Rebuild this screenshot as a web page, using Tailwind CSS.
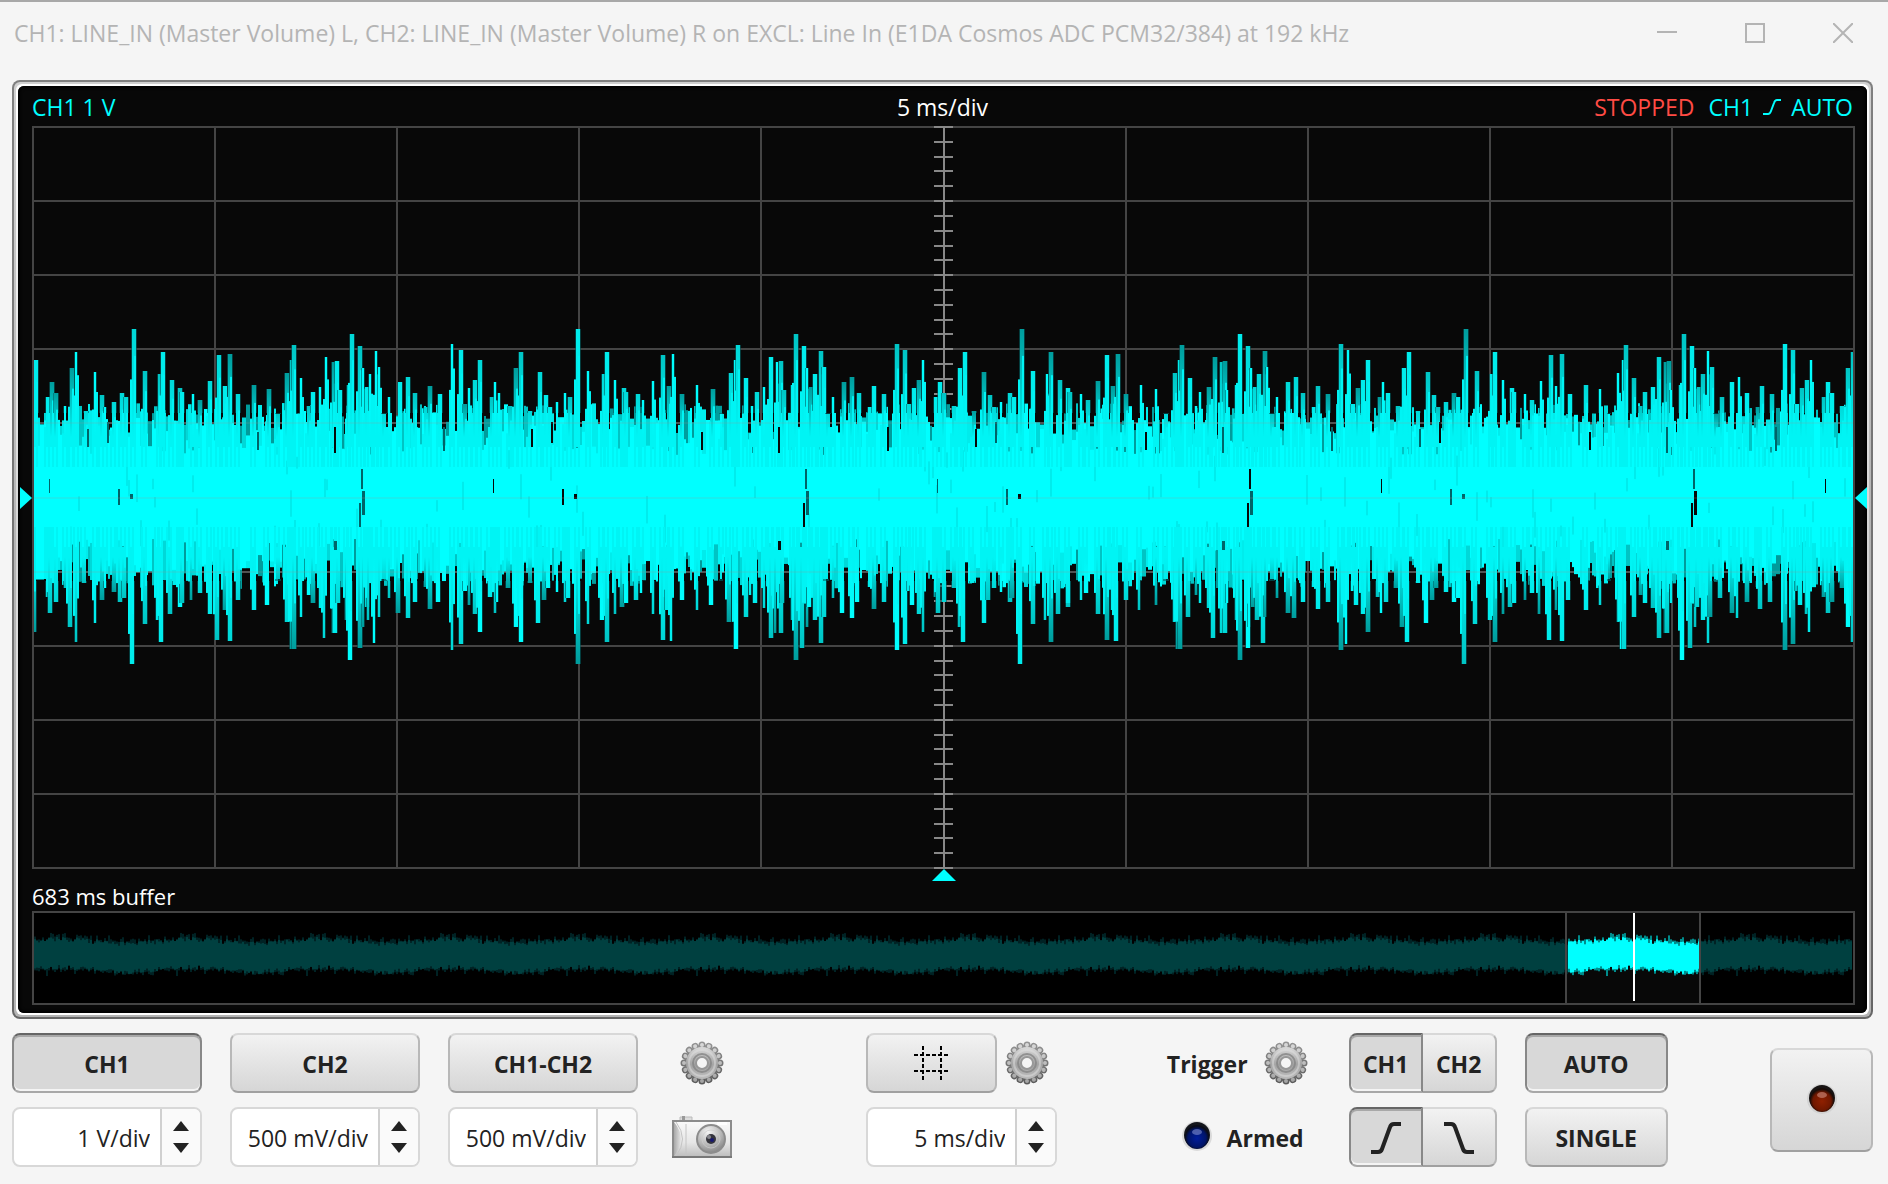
<!DOCTYPE html>
<html lang="en">
  <head>
    <meta charset="UTF-8" />
    <meta name="viewport" content="width=device-width, initial-scale=1.0" />
    <title>Oscilloscope</title>
    <script src="https://cdn.jsdelivr.net/npm/@tailwindcss/browser@4"></script>
  </head>
  <body class="min-h-screen flex flex-col bg-[#f5f5f5] border-t-2 border-[#a8a8a8] text-[23px] leading-7 text-[#222] font-['Open_Sans','Noto_Sans',sans-serif]">
    <!-- Shared icons -->
    <svg class="absolute w-0 h-0" aria-hidden="true">
      <defs>
        <linearGradient id="metal" x1="0" y1="0" x2="0" y2="1">
          <stop offset="0" stop-color="#dadada" />
          <stop offset="0.55" stop-color="#a4a4a4" />
          <stop offset="1" stop-color="#bcbcbc" />
        </linearGradient>
        <linearGradient id="rim" gradientUnits="userSpaceOnUse" x1="0" y1="0" x2="0" y2="44">
          <stop offset="0" stop-color="#969696" />
          <stop offset="1" stop-color="#585858" />
        </linearGradient>
        <linearGradient id="teeth" gradientUnits="userSpaceOnUse" x1="0" y1="0" x2="0" y2="44">
          <stop offset="0" stop-color="#dcdcdc" />
          <stop offset="1" stop-color="#a0a0a0" />
        </linearGradient>
        <symbol id="gear" viewBox="0 0 44 44">
          <circle cx="22" cy="22" r="18" fill="none" stroke="url(#rim)" stroke-width="7" stroke-linecap="round" pathLength="160" stroke-dasharray="0.01 9.99" />
          <circle cx="22" cy="22" r="17" fill="url(#rim)" />
          <circle cx="22" cy="22" r="18" fill="none" stroke="url(#teeth)" stroke-width="4" stroke-linecap="round" pathLength="160" stroke-dasharray="0.01 9.99" />
          <circle cx="22" cy="22" r="16" fill="url(#metal)" />
          <circle cx="22" cy="22" r="13" fill="none" stroke="#e0e0e0" stroke-width="2" opacity="0.5" />
          <circle cx="22" cy="22" r="9" fill="none" stroke="#848484" stroke-width="2" opacity="0.8" />
          <circle cx="22" cy="22" r="6" fill="#f5f5f5" stroke="#989898" stroke-width="2" />
        </symbol>
      </defs>
    </svg>

    <!-- Title bar -->
    <header class="h-[62px] shrink-0 flex items-center justify-between pl-[14px] pr-[35px] text-[#b4b4b4]">
      <h1 class="whitespace-nowrap">CH1: LINE_IN (Master Volume) L, CH2: LINE_IN (Master Volume) R on EXCL: Line In (E1DA Cosmos ADC PCM32/384) at 192 kHz</h1>
      <div class="flex gap-[68px]">
        <button aria-label="Minimize"><svg class="w-5 h-5" viewBox="0 0 20 20"><path d="M0 9h20" stroke="currentColor" stroke-width="2" /></svg></button>
        <button aria-label="Maximize"><svg class="w-5 h-5" viewBox="0 0 20 20"><path d="M1 1h18v18H1z" fill="none" stroke="currentColor" stroke-width="2" /></svg></button>
        <button aria-label="Close"><svg class="w-5 h-5" viewBox="0 0 20 20"><path d="M0 0l20 20M20 0L0 20" stroke="currentColor" stroke-width="2" /></svg></button>
      </div>
    </header>

    <!-- Scope screen -->
    <main class="flex-1 flex flex-col mt-4 ml-3 mr-[15px] p-[2px] rounded-lg bg-linear-to-b from-[#808080] to-[#666]">
      <div class="flex-1 flex flex-col p-[2px] rounded-md bg-linear-to-b from-[#d0d0d0] via-[#b4b4b4] to-[#b4b4b4]">
        <div class="flex-1 flex flex-col p-[2px] rounded-md bg-linear-to-b from-white via-[#d4d4d4] to-white">
          <div class="flex-1 flex flex-col pl-[14px] pr-3 pb-2 rounded-md bg-[#080808] shadow-[inset_0_0_3px_2px_#000]">
            <div class="h-10 pt-px pr-[2px] grid grid-cols-3 items-center text-[#0ff]">
              <span>CH1 1 V</span>
              <span class="text-center text-white">5 ms/div</span>
              <div class="flex items-center justify-end gap-[14px]">
                <span class="text-[#ff4b44]">STOPPED</span>
                <span class="flex items-center gap-[10px]">CH1
                  <svg class="w-[18px] h-[18px]" viewBox="0 0 18 18"><path d="M0 16h5q2 0 3-3l3-8q1-3 3-3h4" fill="none" stroke="currentColor" stroke-width="2" /></svg>
                  AUTO</span>
              </div>
            </div>
            <div class="relative flex-1">
              <canvas id="scope" class="absolute inset-0 w-full h-full"></canvas>
              <svg class="absolute right-full top-1/2 -translate-y-1/2 w-3 h-[22px]" viewBox="0 0 12 22"><path d="M0 0l12 11L0 22z" fill="#0ff" /></svg>
              <svg class="absolute left-full top-1/2 -translate-y-1/2 w-3 h-[22px]" viewBox="0 0 12 22"><path d="M12 0L0 11l12 11z" fill="#0ff" /></svg>
              <svg class="absolute left-1/2 top-full -translate-x-1/2 w-6 h-3" viewBox="0 0 24 12"><path d="M0 12L12 0l12 12z" fill="#0ff" /></svg>
            </div>
            <p class="h-[42px] pt-[13px] text-[22px] font-medium text-white">683 ms buffer</p>
            <div class="relative h-[94px]">
              <canvas id="buffer" class="absolute inset-0 w-full h-full"></canvas>
            </div>
          </div>
        </div>
      </div>
    </main>

    <!-- Controls -->
    <footer class="shrink-0 flex pt-[14px] pb-[17px] pl-3 pr-[15px] font-bold">
      <div class="grid grid-cols-[190px_190px_190px] gap-x-7 gap-y-[14px]">
        <button aria-pressed="true" class="h-[60px] pt-[2px] rounded-lg bg-[#d8d8d8] border-2 border-[#888] border-t-[#666] border-b-[#a8a8a8] shadow-[inset_0_2px_0_#a8a8a8,inset_0_-2px_0_#f4f4f4]">CH1</button>
        <button aria-pressed="false" class="h-[60px] pt-[2px] rounded-lg bg-linear-to-b from-[#f2f2f2] to-[#d6d6d6] border-2 border-[#b8b8b8] border-t-[#d8d8d8] border-b-[#a0a0a0]">CH2</button>
        <button aria-pressed="false" class="h-[60px] pt-[2px] rounded-lg bg-linear-to-b from-[#f2f2f2] to-[#d6d6d6] border-2 border-[#b8b8b8] border-t-[#d8d8d8] border-b-[#a0a0a0]">CH1-CH2</button>

        <div class="h-[60px] flex rounded-lg bg-white border-2 border-[#d8d8d8] font-normal overflow-hidden">
          <input type="text" aria-label="CH1 scale" value="1 V/div" class="flex-1 min-w-0 pt-[2px] pr-[10px] text-right" />
          <div class="w-10 flex flex-col items-center justify-center gap-3 bg-[#fafafa] border-l-2 border-[#d0d0d0]">
            <button aria-label="Increase CH1 scale"><svg class="block w-4 h-[10px]" viewBox="0 0 16 10"><path d="M0 10L8 0l8 10z" fill="#222" /></svg></button>
            <button aria-label="Decrease CH1 scale"><svg class="block w-4 h-[10px]" viewBox="0 0 16 10"><path d="M0 0l8 10 8-10z" fill="#222" /></svg></button>
          </div>
        </div>
        <div class="h-[60px] flex rounded-lg bg-white border-2 border-[#d8d8d8] font-normal overflow-hidden">
          <input type="text" aria-label="CH2 scale" value="500 mV/div" class="flex-1 min-w-0 pt-[2px] pr-[10px] text-right" />
          <div class="w-10 flex flex-col items-center justify-center gap-3 bg-[#fafafa] border-l-2 border-[#d0d0d0]">
            <button aria-label="Increase CH2 scale"><svg class="block w-4 h-[10px]" viewBox="0 0 16 10"><path d="M0 10L8 0l8 10z" fill="#222" /></svg></button>
            <button aria-label="Decrease CH2 scale"><svg class="block w-4 h-[10px]" viewBox="0 0 16 10"><path d="M0 0l8 10 8-10z" fill="#222" /></svg></button>
          </div>
        </div>
        <div class="h-[60px] flex rounded-lg bg-white border-2 border-[#d8d8d8] font-normal overflow-hidden">
          <input type="text" aria-label="CH1-CH2 scale" value="500 mV/div" class="flex-1 min-w-0 pt-[2px] pr-[10px] text-right" />
          <div class="w-10 flex flex-col items-center justify-center gap-3 bg-[#fafafa] border-l-2 border-[#d0d0d0]">
            <button aria-label="Increase CH1-CH2 scale"><svg class="block w-4 h-[10px]" viewBox="0 0 16 10"><path d="M0 10L8 0l8 10z" fill="#222" /></svg></button>
            <button aria-label="Decrease CH1-CH2 scale"><svg class="block w-4 h-[10px]" viewBox="0 0 16 10"><path d="M0 0l8 10 8-10z" fill="#222" /></svg></button>
          </div>
        </div>
      </div>

      <div class="ml-[34px] flex flex-col gap-[14px]">
        <button aria-label="Channel settings" class="h-[60px] flex items-center justify-center"><svg class="w-11 h-11"><use href="#gear" /></svg></button>
        <button aria-label="Save screenshot" class="h-[60px] flex items-center">
          <svg class="w-[60px] h-[42px]" viewBox="0 0 60 42">
            <defs>
              <linearGradient id="body" x1="0" y1="0" x2="0" y2="1">
                <stop offset="0" stop-color="#fafafa" /><stop offset="0.6" stop-color="#e6e6e6" /><stop offset="1" stop-color="#bcbcbc" />
              </linearGradient>
              <linearGradient id="grip" x1="0" y1="0" x2="1" y2="0">
                <stop offset="0" stop-color="#a8a8a8" /><stop offset="1" stop-color="#e4e4e4" />
              </linearGradient>
              <radialGradient id="lens" cx="0.4" cy="0.25" r="0.8">
                <stop offset="0" stop-color="#f4f4f4" /><stop offset="0.6" stop-color="#b4b4b4" /><stop offset="1" stop-color="#808080" />
              </radialGradient>
            </defs>
            <path d="M8 1h12v4H8z" fill="#ddd" stroke="#bbb" />
            <path d="M10 0h3v4h-3z" fill="#999" />
            <path d="M1 5h58v36H1z" fill="url(#body)" stroke="#8c8c8c" stroke-width="2" />
            <path d="M2 6q14 17 0 34z" fill="url(#grip)" />
            <path d="M4 6q13 17 0 34M14 8v32" fill="none" stroke="#c4c4c4" />
            <path d="M45 6h10v3H45z" fill="#fff" />
            <circle cx="39" cy="23" r="14" fill="url(#lens)" stroke="#8c8c8c" stroke-width="2" />
            <circle cx="39" cy="23" r="9" fill="none" stroke="#ccc" opacity="0.7" />
            <circle cx="39" cy="23" r="5" fill="#34343c" />
            <circle cx="40" cy="24" r="2" fill="#181870" />
            <circle cx="37" cy="21" r="2" fill="#8a8a90" />
            <path d="M0 41h60" stroke="#787878" stroke-width="2" />
          </svg>
        </button>
      </div>

      <div class="grow-[134]"></div>

      <div class="w-[191px] flex flex-col gap-[14px]">
        <div class="flex items-center gap-2">
          <button aria-label="Show grid" class="w-[131px] h-[60px] flex items-center justify-center rounded-lg bg-linear-to-b from-[#f2f2f2] to-[#d6d6d6] border-2 border-[#b8b8b8] border-t-[#d8d8d8] border-b-[#a0a0a0]">
            <svg class="w-9 h-[34px]" viewBox="0 0 36 34"><path d="M9 0v34M27 0v34M0 9h36M0 25h36" stroke="#000" stroke-width="2" stroke-dasharray="4 2" /></svg>
          </button>
          <button aria-label="Time settings"><svg class="w-11 h-11"><use href="#gear" /></svg></button>
        </div>
        <div class="h-[60px] flex rounded-lg bg-white border-2 border-[#d8d8d8] font-normal overflow-hidden">
          <input type="text" aria-label="Time base" value="5 ms/div" class="flex-1 min-w-0 pt-[2px] pr-[10px] text-right" />
          <div class="w-10 flex flex-col items-center justify-center gap-3 bg-[#fafafa] border-l-2 border-[#d0d0d0]">
            <button aria-label="Increase time base"><svg class="block w-4 h-[10px]" viewBox="0 0 16 10"><path d="M0 10L8 0l8 10z" fill="#222" /></svg></button>
            <button aria-label="Decrease time base"><svg class="block w-4 h-[10px]" viewBox="0 0 16 10"><path d="M0 0l8 10 8-10z" fill="#222" /></svg></button>
          </div>
        </div>
      </div>

      <div class="grow-[109]"></div>

      <div class="flex flex-col gap-[14px] items-end">
        <div class="h-[60px] flex items-center gap-4">
          <span class="pt-[2px]">Trigger</span>
          <button aria-label="Trigger settings"><svg class="w-11 h-11"><use href="#gear" /></svg></button>
        </div>
        <div class="h-[60px] flex items-center gap-[14px] pr-1">
          <svg class="w-8 h-8" viewBox="0 0 32 32">
            <defs>
              <radialGradient id="blueLed" cx="0.5" cy="0.55" r="0.5"><stop offset="0" stop-color="#001c9c" /><stop offset="0.75" stop-color="#001468" /><stop offset="1" stop-color="#0a0c18" /></radialGradient>
            </defs>
            <circle cx="16" cy="15" r="15" fill="#c8c8c8" opacity="0.6" />
            <circle cx="16" cy="14" r="13" fill="#14161c" />
            <circle cx="16" cy="16" r="12" fill="url(#blueLed)" />
            <ellipse cx="16" cy="11" rx="5" ry="3" fill="#8090d0" opacity="0.6" />
          </svg>
          <span class="pt-[2px]">Armed</span>
        </div>
      </div>

      <div class="ml-[41px] grid grid-cols-[74px_74px] gap-y-[14px]">
        <button aria-pressed="true" class="h-[60px] pt-[2px] rounded-l-lg bg-[#d8d8d8] border-2 border-[#888] border-t-[#666] border-b-[#a8a8a8] shadow-[inset_0_2px_0_#a8a8a8,inset_0_-2px_0_#f4f4f4]">CH1</button>
        <button aria-pressed="false" class="h-[60px] pt-[2px] rounded-r-lg bg-linear-to-b from-[#f2f2f2] to-[#d6d6d6] border-2 border-l-0 border-[#b8b8b8] border-t-[#d8d8d8] border-b-[#a0a0a0]">CH2</button>
        <button aria-label="Rising edge" aria-pressed="true" class="h-[60px] pt-[2px] flex items-center justify-center rounded-l-lg bg-[#d8d8d8] border-2 border-[#888] border-t-[#666] border-b-[#a8a8a8] shadow-[inset_0_2px_0_#a8a8a8,inset_0_-2px_0_#f4f4f4]">
          <svg class="w-[30px] h-8" viewBox="0 0 30 32"><path d="M0 30h7q3 0 4-3l8-22q1-3 4-3h7" fill="none" stroke="#222" stroke-width="4" /></svg>
        </button>
        <button aria-label="Falling edge" aria-pressed="false" class="h-[60px] pt-[2px] flex items-center justify-center rounded-r-lg bg-linear-to-b from-[#f2f2f2] to-[#d6d6d6] border-2 border-l-0 border-[#b8b8b8] border-t-[#d8d8d8] border-b-[#a0a0a0]">
          <svg class="w-[30px] h-8" viewBox="0 0 30 32"><path d="M0 2h7q3 0 4 3l8 22q1 3 4 3h7" fill="none" stroke="#222" stroke-width="4" /></svg>
        </button>
      </div>

      <div class="ml-7 w-[143px] flex flex-col gap-[14px]">
        <button aria-pressed="true" class="h-[60px] pt-[2px] rounded-lg bg-[#d8d8d8] border-2 border-[#888] border-t-[#666] border-b-[#a8a8a8] shadow-[inset_0_2px_0_#a8a8a8,inset_0_-2px_0_#f4f4f4]">AUTO</button>
        <button class="h-[60px] pt-[2px] rounded-lg bg-linear-to-b from-[#f2f2f2] to-[#d6d6d6] border-2 border-[#b8b8b8] border-t-[#d8d8d8] border-b-[#a0a0a0]">SINGLE</button>
      </div>

      <div class="grow-[102]"></div>

      <button aria-label="Record" class="self-center w-[103px] h-[104px] flex items-center justify-center rounded-lg bg-linear-to-b from-[#f2f2f2] to-[#d6d6d6] border-2 border-[#b8b8b8] border-t-[#d8d8d8] border-b-[#a0a0a0]">
        <svg class="w-8 h-8" viewBox="0 0 32 32">
          <defs>
            <radialGradient id="redLed" cx="0.5" cy="0.55" r="0.5"><stop offset="0" stop-color="#902000" /><stop offset="0.75" stop-color="#701800" /><stop offset="1" stop-color="#180c08" /></radialGradient>
          </defs>
          <circle cx="16" cy="15" r="15" fill="#c8c8c8" opacity="0.6" />
          <circle cx="16" cy="14" r="13" fill="#181414" />
          <circle cx="16" cy="16" r="12" fill="url(#redLed)" />
          <ellipse cx="16" cy="11" rx="5" ry="3" fill="#d09080" opacity="0.6" />
        </svg>
      </button>
    </footer>

    <script>
      // Peaks of one signal period: x, height above and below the zero line, in px
      const PERIOD = 444;
      const peaks = [
        [2, 137, 135], [14, 100, 100], [18, 115, 116], [22, 104, 105], [32, 91, 91], [38, 129, 130],
        [43, 145, 145], [52, 86, 86], [62, 125, 126], [68, 102, 103], [72, 90, 91], [80, 95, 95],
        [88, 104, 105], [92, 100, 101], [100, 168, 167], [111, 126, 127], [126, 123, 123],
        [129, 145, 145], [138, 117, 117], [146, 109, 110], [148, 105, 106], [160, 103, 103],
        [166, 97, 96], [176, 116, 117], [185, 142, 143], [191, 111, 113], [196, 143, 144],
        [204, 103, 103], [220, 112, 113], [235, 108, 108], [244, 83, 82], [253, 124, 125],
        [258, 137, 152], [260, 152, 152], [268, 119, 120], [275, 91, 98], [279, 105, 106],
        [287, 110, 111], [293, 140, 141], [300, 135, 136], [303, 136, 136], [306, 107, 106],
        [315, 112, 123], [318, 163, 163], [326, 151, 151], [330, 129, 130], [333, 110, 110],
        [337, 123, 123], [343, 146, 146], [346, 130, 120], [350, 83, 82], [356, 100, 101],
        [366, 115, 116], [374, 120, 121], [381, 104, 105], [392, 90, 90], [396, 111, 112],
        [406, 103, 105], [419, 153, 153], [427, 147, 147], [431, 93, 94], [436, 109, 108], [441, 117, 117],
      ];
      // Places where the trace leaves the background visible: x, from, to, width
      const gaps = [
        [98, -3, 2, 3], [86, -8, 8, 2], [302, -70, -44, 2], [302, 44, 53, 3], [329, -28, -8, 2],
        [330, -6, 18, 3], [327, 6, 30, 2], [55, -68, -50, 2], [75, -75, -54, 2],
        [225, -65, -47, 2], [411, -70, -46, 2], [17, -18, -4, 1],
      ];

      let seed = 7;
      const rnd = () => (seed = (seed * 16807) % 2147483647) / 2147483647;

      function setup(id) {
        const c = document.getElementById(id);
        c.width = c.clientWidth;
        c.height = c.clientHeight;
        return [c.getContext("2d"), c.width, c.height];
      }

      function drawScope() {
        seed = 7;
        const [g, w, h] = setup("scope");
        const mid = Math.round(h / 2) - 1;
        const tones = ["#009c9c", "#00c4c4", "#00d8d8", "#00ecec", "#00ffff"];
        const gx = (i) => Math.round((i * (w - 2)) / 10);
        const gy = (i) => Math.round((i * (h - 2)) / 10);
        g.fillStyle = "#444";
        for (let i = 0; i <= 10; i++) {
          g.fillRect(gx(i), 0, 2, h);
          g.fillRect(0, gy(i), w, 2);
        }
        g.fillStyle = "#888";
        g.fillRect(gx(5), 0, 2, h);
        for (let i = 0; i <= 50; i++) {
          g.fillRect(gx(5) - 9, Math.round((i * (h - 2)) / 50), 19, 2);
        }

        g.save();
        g.beginPath();
        g.rect(2, 0, w - 4, h);
        g.clip();
        // jagged body in narrow strands, then the solid core
        for (let x = 2; x < w; ) {
          const n = rnd() < 0.5 ? 2 : 4;
          const up = 62 + rnd() * 32, down = 62 + rnd() * 30;
          g.fillStyle = tones[Math.floor(rnd() * 5)];
          g.fillRect(x, mid - up, n, up);
          g.fillStyle = tones[Math.floor(rnd() * 5)];
          g.fillRect(x, mid, n, down);
          g.fillStyle = "#0ff";
          const a = 42 + rnd() * 38, b = 42 + rnd() * 36;
          g.fillRect(x, mid - a, n, a + b);
          if (rnd() < 0.15) {
            g.fillStyle = "#00ecec";
            g.fillRect(x, mid - 50 + rnd() * 80, 2, 10 + rnd() * 20);
          }
          x += n;
        }
        for (let base = 0; base < w; base += PERIOD) {
          for (const [px, up, down] of peaks) {
            const x = base + px, k = Math.floor(rnd() * 5);
            const wide = k === 4 ? 2 : 4;
            const dx = rnd() < 0.4 ? -2 : 0;
            g.fillStyle = "rgba(0,96,100,0.6)";
            g.fillRect(x - 1, mid - up, wide + 2, up - 84);
            g.fillRect(x + dx - 1, mid + 84, wide + 2, down - 84);
            // shade brightens from tip to body
            const t = g.createLinearGradient(0, mid - up, 0, mid - 60);
            t.addColorStop(0, tones[k]);
            t.addColorStop(1, "#00f4f4");
            g.fillStyle = t;
            g.fillRect(x, mid - up, wide, up - 50);
            const b = g.createLinearGradient(0, mid + down, 0, mid + 60);
            b.addColorStop(0, tones[Math.floor(rnd() * 5)]);
            b.addColorStop(1, "#00f4f4");
            g.fillStyle = b;
            g.fillRect(x + dx, mid + 50, wide, down - 50);
            // brighter flanks, shorter than the peak
            g.fillStyle = "#00f4f4";
            g.fillRect(x + 2, mid - up * 0.84, 2, up * 0.84 - 30);
            g.fillRect(x - 2, mid - up * 0.7, 2, up * 0.7 - 30);
            g.fillRect(x + dx - 2, mid + 30, 2, down * 0.82 - 30);
            g.fillRect(x + dx + 2, mid + 30, 2, down * 0.7 - 30);
          }
          for (const [px, from, to, gw] of gaps) {
            g.fillStyle = rnd() < 0.5 ? "#080808" : "#006468";
            g.fillRect(base + px, mid + from, gw, to - from);
          }
        }
        g.restore();

        g.fillStyle = "rgba(150,150,150,0.16)";
        for (let i = 4; i <= 6; i++) g.fillRect(2, gy(i), w - 4, 2);
      }

      function drawBuffer() {
        seed = 11;
        const [g, w, h] = setup("buffer");
        const mid = 44;
        const cols = [];
        for (let i = 0; i < 65; i++) {
          const s = Math.sin(((i + 2) / 65) * Math.PI * 2);
          cols.push([11 + rnd() * 5 + s * 2, 12 + rnd() * 5 - s * 2, rnd() * 5, rnd() * 4]);
        }
        cols[38][2] = 8;
        cols[7][3] = 7;
        const from = Math.round(w * 0.8415), to = Math.round(w * 0.915);
        g.fillStyle = "#000";
        g.fillRect(0, 0, w, h);
        g.fillStyle = "#080808";
        g.fillRect(from, 0, to - from, h);
        for (let x = 2; x < w - 4; x += 2) {
          const [u, d, fu, fd] = cols[(x / 2) % 65];
          const on = x > from && x < to;
          g.fillStyle = on ? "#008c8c" : "#002224";
          g.fillRect(x, mid - u - fu, 2, u + d + fu + fd);
          g.fillStyle = on ? "#0ff" : "#004040";
          g.fillRect(x, mid - u, 2, u + d);
        }
        g.fillStyle = "#444";
        g.fillRect(from - 1, 0, 2, h);
        g.fillRect(to - 1, 0, 2, h);
        g.fillRect(0, 0, w, 2);
        g.fillRect(0, h - 2, w, 2);
        g.fillRect(0, 0, 2, h);
        g.fillRect(w - 2, 0, 2, h);
        g.fillStyle = "#fff";
        g.fillRect(Math.round((from + to) / 2), 2, 2, 88);
      }

      // Redraw whenever the layout gives a canvas another size
      new ResizeObserver(drawScope).observe(document.getElementById("scope"));
      new ResizeObserver(drawBuffer).observe(document.getElementById("buffer"));
    </script>
  </body>
</html>
